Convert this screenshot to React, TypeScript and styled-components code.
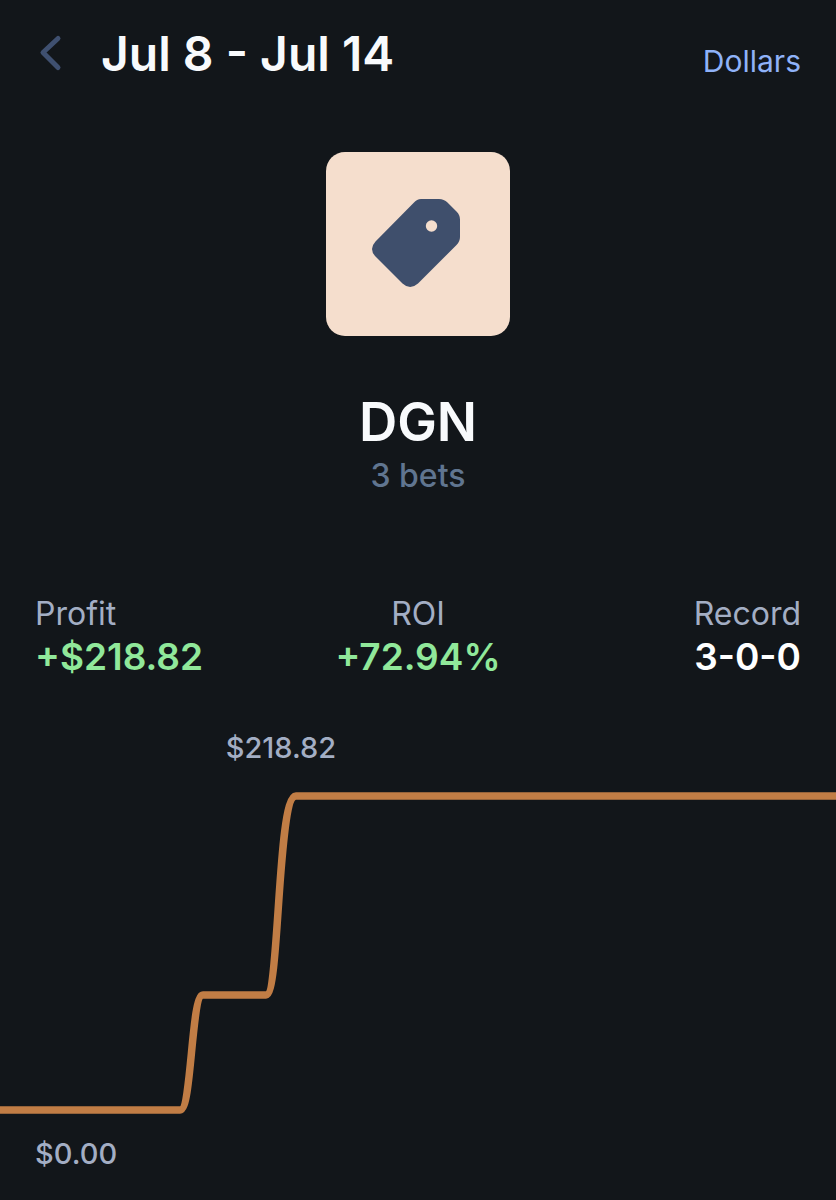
import React from "react";
import styled, { createGlobalStyle } from "styled-components";

const GlobalStyle = createGlobalStyle`
  *, *::before, *::after { box-sizing: border-box; }
  body {
    margin: 0;
    background: #12161a;
    color: #f8fafc;
    font-family: Inter, "Liberation Sans", sans-serif;
  }
`;

const Page = styled.main`
  min-height: 100vh;
  display: flex;
  flex-direction: column;
`;

const Header = styled.header`
  display: flex;
  align-items: center;
  padding: 20px 35px 0;
`;

const BackButton = styled.button`
  display: flex;
  padding: 0;
  margin-right: 36px;
  border: 0;
  background: none;
  color: #3f5070;
  cursor: pointer;
`;

const Title = styled.h1`
  flex: 1;
  margin: 0;
  font-size: 48px;
  line-height: 68px;
  font-weight: 600;
  white-space: nowrap;
`;

const UnitButton = styled.button`
  padding: 14px 0 0;
  border: 0;
  background: none;
  color: #8fb2f8;
  font-family: inherit;
  font-size: 30px;
  line-height: 40px;
  cursor: pointer;
`;

const Hero = styled.section`
  display: flex;
  flex-direction: column;
  align-items: center;
  padding-top: 64px;
`;

const Tile = styled.div`
  display: flex;
  align-items: center;
  justify-content: center;
  width: 184px;
  height: 184px;
  border-radius: 19px;
  background: #f5decd;
`;

const Name = styled.h2`
  margin: 52px 0 0;
  font-size: 53px;
  line-height: 68px;
  font-weight: 600;
`;

const BetCount = styled.p`
  margin: 0;
  color: #607590;
  font-size: 32px;
  line-height: 40px;
  font-weight: 500;
`;

const Stats = styled.dl`
  display: grid;
  grid-template-columns: 1fr auto 1fr;
  margin: 0;
  padding: 98px 35px 0;
`;

const Stat = styled.div<{ $align: "left" | "center" | "right" }>`
  text-align: ${(p) => p.$align};
`;

const StatLabel = styled.dt`
  color: #a3aec4;
  font-size: 32px;
  line-height: 40px;
`;

const StatValue = styled.dd<{ $positive?: boolean }>`
  margin: 0;
  color: ${(p) => (p.$positive ? "#90e89a" : "#ffffff")};
  font-size: 37px;
  line-height: 46px;
  font-weight: 600;
`;

const Chart = styled.figure`
  display: flex;
  flex-direction: column;
  margin: 0;
  padding-top: 48px;
`;

const ChartLabel = styled.span<{ $start: string }>`
  padding-left: ${(p) => p.$start};
  color: #a3aec4;
  font-size: 29px;
  line-height: 40px;
  font-weight: 500;
`;

const Plot = styled.svg`
  display: block;
  width: 100%;
  height: 366px;
`;

const stats = [
  { label: "Profit", value: "+$218.82", align: "left", positive: true },
  { label: "ROI", value: "+72.94%", align: "center", positive: true },
  { label: "Record", value: "3-0-0", align: "right", positive: false },
] as const;

export default function App() {
  return (
    <>
      <GlobalStyle />
      <Page>
        <Header>
          <BackButton type="button" aria-label="Back">
            <svg width="30" height="44" viewBox="0 0 30 44" fill="none" aria-hidden="true">
              <path
                d="M23 6.500L8 20.500L23 35.500"
                stroke="currentColor"
                strokeWidth="5"
                strokeLinecap="round"
                strokeLinejoin="round"
              />
            </svg>
          </BackButton>
          <Title>Jul 8 - Jul 14</Title>
          <UnitButton type="button">Dollars</UnitButton>
        </Header>

        <Hero>
          <Tile>
            <svg width="92" height="90" viewBox="0 0 92 90" aria-hidden="true">
              <path
                fill="#3f4f6c"
                d="M49 0H67Q72 0 75.500 3.500L84.500 12.500Q88 16 88 20.500V38Q88 42.500 84.500 46L46 84.500Q38 91.500 30.500 84.500L3.500 57.500Q-3.500 50 3.500 42.500L41.500 4Q45 0 49 0Z"
              />
              <circle cx="59.500" cy="27" r="5.700" fill="#f5decd" />
            </svg>
          </Tile>
          <Name>DGN</Name>
          <BetCount>3 bets</BetCount>
        </Hero>

        <Stats>
          {stats.map((s) => (
            <Stat key={s.label} $align={s.align}>
              <StatLabel>{s.label}</StatLabel>
              <StatValue $positive={s.positive}>{s.value}</StatValue>
            </Stat>
          ))}
        </Stats>

        <Chart>
          <ChartLabel $start="27%">$218.82</ChartLabel>
          <Plot viewBox="0 0 836 366" preserveAspectRatio="none" role="img" aria-label="Profit over time">
            <path
              d="M-8 342H180C192 342 191 227 203 227H266C280 227 277 28 296 28H844"
              fill="none"
              stroke="#c17d45"
              strokeWidth="7.500"
              strokeLinejoin="round"
              vectorEffect="non-scaling-stroke"
            />
          </Plot>
          <ChartLabel $start="35px">$0.00</ChartLabel>
        </Chart>
      </Page>
    </>
  );
}
